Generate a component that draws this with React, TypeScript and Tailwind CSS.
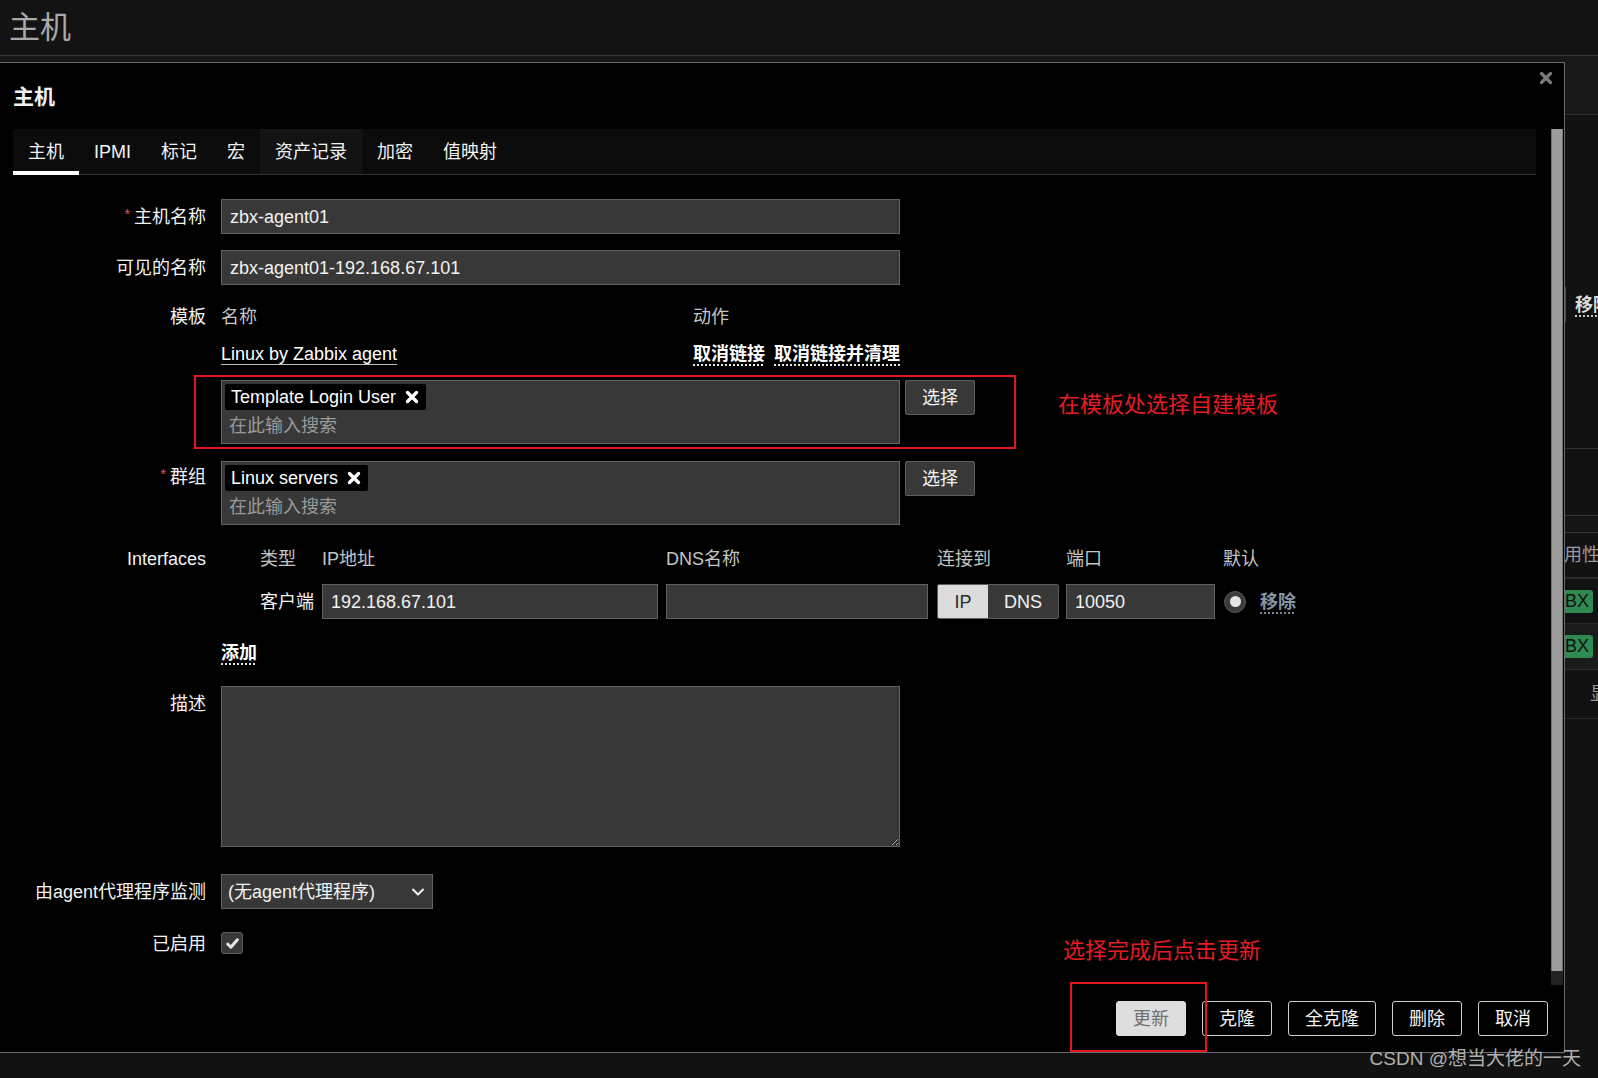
import React from "react";

const tabs = ["主机", "IPMI", "标记", "宏", "资产记录", "加密", "值映射"];

function XIcon({ size = 13, color = "#ffffff", width = 3 }: { size?: number; color?: string; width?: number }) {
  return (
    <svg width={size} height={size} viewBox="0 0 14 14" fill="none">
      <path d="M2.5 2.5 L11.5 11.5 M11.5 2.5 L2.5 11.5" stroke={color} strokeWidth={width} strokeLinecap="round" />
    </svg>
  );
}

function Label({ text, required }: { text: string; required?: boolean }) {
  return (
    <span className="whitespace-nowrap">
      {required && <span className="mr-[4px] align-top text-[14px] leading-[18px] text-[#e45959]">*</span>}
      {text}
    </span>
  );
}

function Row({
  label,
  required,
  labelClass = "self-center",
  className = "",
  children,
}: {
  label: string;
  required?: boolean;
  labelClass?: string;
  className?: string;
  children: React.ReactNode;
}) {
  return (
    <div className={`flex ${className}`}>
      <div className={`w-[193px] shrink-0 text-right text-[#f2f2f2] ${labelClass}`}>
        <Label text={label} required={required} />
      </div>
      <div className="ml-[15px] flex-1">{children}</div>
    </div>
  );
}

function TextInput({ value, className = "w-[679px]" }: { value: string; className?: string }) {
  return (
    <div className={`flex h-[35px] items-center border border-[#626262] bg-[#383838] px-[8px] text-[#f2f2f2] ${className}`}>
      {value}
    </div>
  );
}

function Chip({ text }: { text: string }) {
  return (
    <div className="inline-flex h-[26px] items-center gap-[9px] rounded-[2px] bg-black pl-[6px] pr-[7px] text-white">
      <span>{text}</span>
      <XIcon size={14} width={3.4} />
    </div>
  );
}

function MultiSelect({ chip }: { chip: string }) {
  return (
    <div className="flex items-start">
      <div className="h-[64px] w-[679px] border border-[#626262] bg-[#383838] p-[3px]">
        <Chip text={chip} />
        <div className="mt-[4px] pl-[4px] text-[#9a9a9a]">在此输入搜索</div>
      </div>
      <button className="ml-[5px] h-[35px] w-[70px] rounded-[2px] border border-[#5e5e5e] bg-[#383838] text-[#f2f2f2]">
        选择
      </button>
    </div>
  );
}

function BackgroundPage() {
  return (
    <div className="flex flex-col">
      <header className="flex h-[56px] items-center border-b border-[#383838] bg-[#131313] pl-[9px]">
        <h1 className="text-[31px] leading-[36px] text-[#a9a9a9]">主机</h1>
      </header>
      <div className="h-[59px] border-b border-[#2f2f2f] bg-[#181818]" />
      <div className="flex flex-col whitespace-nowrap pl-[1565px]">
        <div className="mt-[172px] flex h-[35px] items-center border-l border-[#474747] pl-[9px]">
          <span className="font-bold text-[#dcdcdc] underline decoration-dotted underline-offset-[5px]">移除</span>
        </div>
        <div className="mt-[126px] border-t border-[#303030]" />
        <div className="mt-[66px] h-[18px] border-y border-[#333] bg-[#161616]" />
        <div className="flex h-[44px] items-center text-[#9a9a9a]">
          <span className="ml-[-19px]">可用性</span>
        </div>
        <div className="border-t-2 border-[#2a2a2a]" />
        <div className="flex h-[44px] items-center">
          <span className="ml-[-15px] h-[23px] rounded-[3px] bg-[#2e8a50] px-[4px] text-[18px] leading-[23px] text-[#111]">ZBX</span>
        </div>
        <div className="border-t border-[#2a2a2a]" />
        <div className="flex h-[45px] items-center bg-[#1b1b1b]">
          <span className="ml-[-15px] h-[23px] rounded-[3px] bg-[#2e8a50] px-[4px] text-[18px] leading-[23px] text-[#111]">ZBX</span>
        </div>
        <div className="border-t border-[#2a2a2a]" />
        <div className="flex h-[48px] items-center pl-[25px] text-[#9a9a9a]">显示</div>
        <div className="border-t border-[#2a2a2a]" />
      </div>
    </div>
  );
}

function Interfaces() {
  return (
    <div>
      <div className="mt-[2px] flex text-[#c4c4c4]">
        <div className="w-[39px]" />
        <div className="w-[62px]">类型</div>
        <div className="w-[344px]">IP地址</div>
        <div className="w-[271px]">DNS名称</div>
        <div className="w-[129px]">连接到</div>
        <div className="w-[158px]">端口</div>
        <div className="ml-[-1px] whitespace-nowrap">默认</div>
      </div>
      <div className="mt-[13px] flex items-center">
        <div className="w-[39px]" />
        <div className="w-[62px] whitespace-nowrap text-[#f2f2f2]">客户端</div>
        <TextInput value="192.168.67.101" className="w-[336px]" />
        <TextInput value="" className="ml-[8px] w-[262px]" />
        <div className="ml-[9px] flex h-[35px] w-[122px] overflow-hidden rounded-[2px] border border-[#5e5e5e]">
          <div className="flex w-[50px] items-center justify-center bg-[#dcdcdc] text-[#2b2b2b]">IP</div>
          <div className="flex flex-1 items-center justify-center bg-[#383838] text-[#f2f2f2]">DNS</div>
        </div>
        <TextInput value="10050" className="ml-[7px] w-[149px]" />
        <div className="ml-[9px] flex h-[22px] w-[22px] items-center justify-center rounded-full border border-[#555] bg-[#3c3c3c]">
          <div className="h-[11px] w-[11px] rounded-full bg-[#e6e6e6]" />
        </div>
        <span className="ml-[14px] font-bold text-[#8896a4] underline decoration-dotted underline-offset-[5px]">移除</span>
      </div>
      <div className="mt-[22px]">
        <span className="font-bold text-white underline decoration-dotted underline-offset-[5px]">添加</span>
      </div>
    </div>
  );
}

function Modal() {
  return (
    <div className="absolute left-0 top-[62px] flex h-[991px] w-[1565px] flex-col border-y border-r border-[#6b6b6b] bg-black">
      <button className="absolute right-[11px] top-[8px]">
        <XIcon size={14} color="#7a7a7a" width={3.2} />
      </button>
      <div className="h-[66px] shrink-0 pl-[13px] pt-[22px]">
        <h2 className="text-[21px] font-bold leading-[24px] text-[#f0f0f0]">主机</h2>
      </div>

      <div className="flex h-[856px] shrink-0">
        <div className="ml-[13px] flex w-[1523px] flex-col">
          {/* Tabs */}
          <div className="flex h-[46px] shrink-0 border-b border-[#343434] bg-[#0b0b0b]">
            {tabs.map((t, i) => (
              <div
                key={t}
                className={`relative flex items-center px-[15px] text-[#f2f2f2] ${t === "资产记录" ? "bg-[#131313]" : ""}`}
              >
                {t}
                {i === 0 && <div className="absolute bottom-[-1px] left-0 right-0 h-[4px] bg-white" />}
              </div>
            ))}
          </div>

          {/* Form */}
          <div className="flex flex-col">
            <Row label="主机名称" required className="mt-[24px]">
              <TextInput value="zbx-agent01" />
            </Row>
            <Row label="可见的名称" className="mt-[16px]">
              <TextInput value="zbx-agent01-192.168.67.101" />
            </Row>

            <Row label="模板" labelClass="self-start" className="mt-[20px]">
              <div className="flex text-[#c4c4c4]">
                <div className="w-[472px]">名称</div>
                <div>动作</div>
              </div>
              <div className="mt-[13px] flex">
                <div className="w-[472px]">
                  <span className="text-white underline decoration-[#bdbdbd] underline-offset-[4px]">Linux by Zabbix agent</span>
                </div>
                <div className="flex gap-[9px] font-bold text-white">
                  <span className="underline decoration-dotted underline-offset-[5px]">取消链接</span>
                  <span className="underline decoration-dotted underline-offset-[5px]">取消链接并清理</span>
                </div>
              </div>
              <div className="relative mt-[14px] flex items-start">
                <MultiSelect chip="Template Login User" />
                <span className="ml-[83px] mt-[10px] whitespace-nowrap text-[22px] leading-[30px] text-[#e51c23]">
                  在模板处选择自建模板
                </span>
                <div className="absolute left-[-27px] top-[-5px] h-[74px] w-[822px] border-2 border-[#e3161d]" />
              </div>
            </Row>

            <Row label="群组" required labelClass="self-start pt-[4px]" className="mt-[17px]">
              <MultiSelect chip="Linux servers" />
            </Row>

            <Row label="Interfaces" labelClass="self-start pt-[2px]" className="mt-[20px]">
              <Interfaces />
            </Row>

            <Row label="描述" labelClass="self-start pt-[6px]" className="mt-[21px]">
              <textarea
                readOnly
                className="block h-[161px] w-[679px] resize border border-[#626262] bg-[#383838] [color-scheme:dark]"
              />
            </Row>

            <Row label="由agent代理程序监测" className="mt-[27px]">
              <div className="flex h-[35px] w-[212px] items-center justify-between border border-[#626262] bg-[#383838] pl-[6px] pr-[7px] text-[#f2f2f2]">
                <span className="whitespace-nowrap">(无agent代理程序)</span>
                <svg width="14" height="14" viewBox="0 0 14 14" fill="none">
                  <path d="M2 4.5 L7 9.5 L12 4.5" stroke="#f2f2f2" strokeWidth="2" strokeLinecap="round" strokeLinejoin="round" />
                </svg>
              </div>
            </Row>

            <Row label="已启用" labelClass="self-start" className="mt-[23px]">
              <div className="flex items-start">
                <div className="flex h-[22px] w-[22px] items-center justify-center rounded-[3px] border border-[#5e5e5e] bg-[#383838]">
                  <svg width="15" height="15" viewBox="0 0 14 14" fill="none">
                    <path d="M2.5 7.5 L5.5 10.5 L11.5 3.5" stroke="#e6e6e6" strokeWidth="2.8" strokeLinecap="round" strokeLinejoin="round" />
                  </svg>
                </div>
                <span className="ml-[820px] mt-[4px] whitespace-nowrap text-[22px] leading-[30px] text-[#e51c23]">
                  选择完成后点击更新
                </span>
              </div>
            </Row>
          </div>
        </div>

        {/* Scrollbar */}
        <div className="ml-[15px] flex w-[12px] flex-col">
          <div className="h-[842px] border-x border-[#767676] bg-[#9c9c9c]" />
          <div className="h-[14px] bg-[#222]" />
        </div>
      </div>

      {/* Footer */}
      <footer className="relative flex flex-1 items-center justify-end gap-[16px] pr-[16px]">
        <button className="h-[35px] w-[70px] rounded-[3px] border border-[#dedede] bg-[#dedede] text-[#6f6f6f]">更新</button>
        <button className="h-[35px] w-[70px] rounded-[3px] border border-[#cfcfcf] bg-black text-[#f2f2f2]">克隆</button>
        <button className="h-[35px] w-[88px] rounded-[3px] border border-[#cfcfcf] bg-black text-[#f2f2f2]">全克隆</button>
        <button className="h-[35px] w-[70px] rounded-[3px] border border-[#cfcfcf] bg-black text-[#f2f2f2]">删除</button>
        <button className="h-[35px] w-[70px] rounded-[3px] border border-[#cfcfcf] bg-black text-[#f2f2f2]">取消</button>
        <div className="absolute left-[1070px] top-[-3px] h-[70px] w-[137px] border-2 border-[#e3161d]" />
      </footer>
    </div>
  );
}

export default function App() {
  return (
    <div className="relative h-[1078px] w-[1598px] overflow-hidden bg-[#121212] text-[18px] leading-[24px] text-[#f2f2f2] [font-family:'Liberation_Sans','Noto_Sans_CJK_SC',sans-serif]">
      <BackgroundPage />
      <Modal />
      <div className="absolute right-[17px] top-[1046px] whitespace-nowrap text-[19px] leading-[26px] text-[#b0b0b0]">
        CSDN @想当大佬的一天
      </div>
    </div>
  );
}
